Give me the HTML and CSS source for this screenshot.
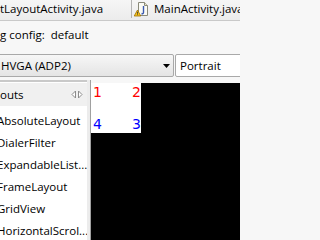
FILE: index.html
```html
<!DOCTYPE html>
<html>
<head>
<meta charset="utf-8">
<link rel="stylesheet" href="styles.css">
</head>
<body>
<div class="app">
  <div class="tabs">
    <div class="tab tab-first">tLayoutActivity.java</div>
    <div class="tab tab-second">
      <svg class="file-icon" width="16" height="16" viewBox="0 0 16 16">
        <path d="M4.5 1.5h6l3 3v10h-9z" fill="#fbfbf5" stroke="#8a8a7a"/>
        <path d="M10.5 1.5v3h3" fill="#e8e4c8" stroke="#8a8a7a"/>
        <path d="M9.5 5v6.5c0 1-1 1.5-2 1" fill="none" stroke="#3a5ab0" stroke-width="1.4"/>
        <path d="M3.5 9l3.3 6h-6.6z" fill="#f5c21b" stroke="#a07000" stroke-width="0.8"/>
        <rect x="3.1" y="10.8" width="0.8" height="2" fill="#333"/>
        <rect x="3.1" y="13.3" width="0.8" height="0.8" fill="#333"/>
      </svg>
      <span>MainActivity.java</span>
    </div>
  </div>
  <div class="config">g config:&nbsp; default</div>
  <div class="combos">
    <div class="combo combo-device">
      <span>HVGA (ADP2)</span>
      <svg class="arrow" width="7" height="4" viewBox="0 0 7 4"><path d="M0 0h7L3.5 4z" fill="#000"/></svg>
    </div>
    <div class="combo combo-orient"><span>Portrait</span></div>
  </div>
  <div class="main">
    <div class="palette">
      <div class="pal-header">
        <span>outs</span>
        <svg class="collapse" width="12" height="9" viewBox="0 0 12 9">
          <path d="M4.5 1L1 4.5 4.5 8M7.5 1L11 4.5 7.5 8M4.5 1v7M7.5 1v7" fill="#fff" stroke="#8c8c8c" stroke-width="1"/>
        </svg>
      </div>
      <ul class="pal-list">
        <li>AbsoluteLayout</li>
        <li>DialerFilter</li>
        <li>ExpandableList...</li>
        <li>FrameLayout</li>
        <li>GridView</li>
        <li>HorizontalScrol...</li>
      </ul>
    </div>
    <div class="sash"></div>
    <div class="canvas">
      <div class="screen">
        <div class="grid">
          <span class="num red">1</span>
          <span class="num red right">2</span>
          <span class="num blue">4</span>
          <span class="num blue right">3</span>
        </div>
      </div>
    </div>
  </div>
</div>
</body>
</html>
```

FILE: styles.css
```css
html, body {
  margin: 0;
  padding: 0;
  overflow: hidden;
}
body {
  font-family: "Open Sans", "Noto Sans", sans-serif;
  font-size: 11.5px;
  color: #000;
  background: #f7f7f7;
  width: 240px;
}
.app {
  width: 240px;
  height: 240px;
  display: flex;
  flex-direction: column;
  overflow: hidden;
}
.tabs {
  height: 20px;
  flex: none;
  display: flex;
  align-items: stretch;
  background: linear-gradient(#f6f6f6, #ececec);
  border-bottom: 1px solid #c9c9c9;
  white-space: nowrap;
}
.tab {
  display: flex;
  align-items: center;
  flex: none;
}
.tab-first {
  width: 131px;
  padding-bottom: 3px;
}
.tab-second {
  border-left: 1px solid #b4b4b4;
  padding-left: 2px;
  padding-bottom: 1px;
  margin-bottom: 2px;
  gap: 4px;
}
.file-icon {
  flex: none;
}
.config {
  height: 32px;
  flex: none;
  display: flex;
  align-items: center;
  padding-bottom: 6px;
  box-sizing: border-box;
  white-space: nowrap;
  background: #f7f7f7;
}
.combos {
  height: 23px;
  flex: none;
  display: flex;
  gap: 1px;
  margin-top: 1px;
}
.combo {
  box-sizing: border-box;
  height: 23px;
  border: 1px solid #a9a9a9;
  border-radius: 2px;
  background: linear-gradient(#f7f7f7, #e4e4e4);
  display: flex;
  align-items: center;
  white-space: nowrap;
}
.combo-device {
  width: 177px;
  flex: none;
  margin-left: -3px;
  padding-left: 3px;
  justify-content: space-between;
  padding-right: 3px;
}
.combo-orient {
  flex: 1;
  padding-left: 4px;
  margin-right: -3px;
  background: #fff;
}
.main {
  flex: 1;
  display: flex;
  margin-top: 3px;
  min-height: 0;
}
.palette {
  width: 87px;
  flex: none;
  background: #fff;
  border-top: 2px solid #c9c9c9;
  overflow: hidden;
}
.pal-header {
  height: 23px;
  background: #f0f0f0;
  border-top: 1px solid #fff;
  display: flex;
  align-items: center;
  justify-content: space-between;
  padding-right: 4px;
  white-space: nowrap;
}
.pal-list {
  list-style: none;
  margin: 0;
  padding: 4px 0 0 0;
}
.pal-list li {
  height: 22px;
  line-height: 22px;
  white-space: nowrap;
  margin-left: -3px;
}
.sash {
  width: 3px;
  flex: none;
  background: #ececec;
  border-right: 1px solid #a0a0a0;
}
.canvas {
  flex: 1;
  background: #f7f7f7;
  display: flex;
  flex-direction: column;
}
.screen {
  flex: 1;
  margin-top: 3px;
  background: #000;
}
.grid {
  width: 50px;
  height: 50px;
  background: #fff;
  display: grid;
  grid-template-columns: 1fr 1fr;
  grid-template-rows: 1fr 1fr;
  font-family: "DejaVu Sans", sans-serif;
  font-size: 14px;
}
.num {
  padding: 0 0 0 2px;
  line-height: 18px;
}
.num.right {
  text-align: right;
  padding: 0;
}
.grid .num:nth-child(3), .grid .num:nth-child(4) {
  align-self: end;
  line-height: 17px;
}
.red { color: #ff0000; }
.blue { color: #0000ff; }
```
